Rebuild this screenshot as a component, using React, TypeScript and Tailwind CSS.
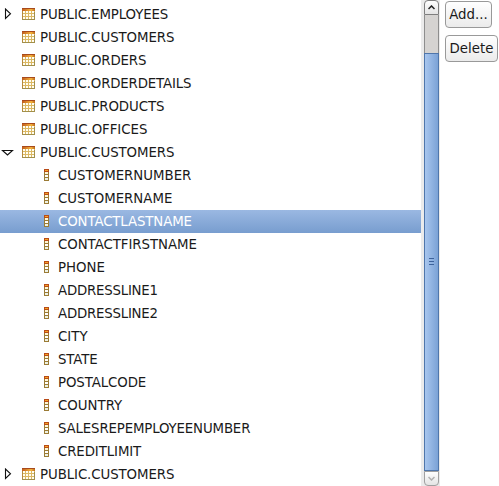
import React from "react";

type Row = {
  label: string;
  kind: "table" | "column";
  arrow?: "closed" | "open";
  selected?: boolean;
  tracking?: string;
};

const rows: Row[] = [
  { label: "PUBLIC.EMPLOYEES", kind: "table", arrow: "closed", tracking: "tracking-[-0.11px]" },
  { label: "PUBLIC.CUSTOMERS", kind: "table", tracking: "tracking-[-0.08px]" },
  { label: "PUBLIC.ORDERS", kind: "table", tracking: "tracking-[-0.13px]" },
  { label: "PUBLIC.ORDERDETAILS", kind: "table", tracking: "tracking-[-0.15px]" },
  { label: "PUBLIC.PRODUCTS", kind: "table", tracking: "tracking-[-0.08px]" },
  { label: "PUBLIC.OFFICES", kind: "table", tracking: "tracking-[-0.03px]" },
  { label: "PUBLIC.CUSTOMERS", kind: "table", arrow: "open", tracking: "tracking-[-0.08px]" },
  { label: "CUSTOMERNUMBER", kind: "column" },
  { label: "CUSTOMERNAME", kind: "column" },
  { label: "CONTACTLASTNAME", kind: "column", selected: true, tracking: "tracking-[-0.12px]" },
  { label: "CONTACTFIRSTNAME", kind: "column", tracking: "tracking-[-0.05px]" },
  { label: "PHONE", kind: "column" },
  { label: "ADDRESSLINE1", kind: "column", tracking: "tracking-[-0.22px]" },
  { label: "ADDRESSLINE2", kind: "column", tracking: "tracking-[-0.22px]" },
  { label: "CITY", kind: "column" },
  { label: "STATE", kind: "column", tracking: "tracking-[-0.15px]" },
  { label: "POSTALCODE", kind: "column", tracking: "tracking-[-0.1px]" },
  { label: "COUNTRY", kind: "column" },
  { label: "SALESREPEMPLOYEENUMBER", kind: "column", tracking: "tracking-[-0.15px]" },
  { label: "CREDITLIMIT", kind: "column", tracking: "tracking-[-0.1px]" },
  { label: "PUBLIC.CUSTOMERS", kind: "table", arrow: "closed", tracking: "tracking-[-0.08px]" },
];

function TableIcon() {
  return (
    <svg width="13" height="12" viewBox="0 0 13 12" shapeRendering="crispEdges">
      <defs>
        <linearGradient id="tableHead">
          <stop offset="0" stopColor="#c05a1c" />
          <stop offset="0.7" stopColor="#f6b43c" />
          <stop offset="1" stopColor="#b8681c" />
        </linearGradient>
      </defs>
      <rect width="13" height="12" fill="#dcb964" />
      <rect width="13" height="1" fill="#a84a1c" />
      <rect y="1" width="13" height="2" fill="url(#tableHead)" />
      {[3, 6, 9].map((y) =>
        [1, 4, 7, 10].map((x) => <rect key={`${x}-${y}`} x={x} y={y} width="2" height="2" fill="#fffdf2" />)
      )}
      <path d="M0.5 3v9" stroke="#b58a3c" />
      <path d="M0 11.5h13M12.5 4v8" stroke="#a2904c" />
    </svg>
  );
}

function ColumnIcon() {
  return (
    <svg width="5" height="12" viewBox="0 0 5 12" shapeRendering="crispEdges">
      <rect width="5" height="12" fill="#9b7b35" />
      <rect width="5" height="3" fill="#b84b18" />
      <rect x="1" y="1" width="3" height="1" fill="#f5a623" />
      <rect x="1" y="3" width="3" height="2" fill="#fff6d5" />
      <rect x="1" y="6" width="3" height="2" fill="#ffffff" />
      <rect x="1" y="9" width="3" height="2" fill="#edf2e5" />
    </svg>
  );
}

function Arrow({ kind }: { kind?: "closed" | "open" }) {
  return (
    <svg width="22" height="13" viewBox="0 0 22 13" className="shrink-0">
      {kind === "closed" && <path d="M5.5 1v9.5L10.5 5.75z" fill="#fff" stroke="#111" strokeWidth="1.1" />}
      {kind === "open" && <path d="M2.5 4.5h10L7.5 9z" fill="#fff" stroke="#111" strokeWidth="1.1" />}
    </svg>
  );
}

function ScrollButton({ up }: { up?: boolean }) {
  return (
    <div
      className={
        "flex h-[15px] shrink-0 items-center justify-center border bg-linear-to-b from-[#fefefe] to-[#e4e4e4] " +
        (up ? "rounded-t-[4px] border-[#7e7e7e]" : "rounded-b-[4px] border-[#a0a0a0]")
      }
    >
      <svg width="7" height="5" viewBox="0 0 7 5" fill="none" strokeWidth="1.5">
        {up ? <path d="M0.5 4L3.5 1L6.5 4" stroke="#222" /> : <path d="M0.5 1L3.5 4L6.5 1" stroke="#b0b0b0" />}
      </svg>
    </div>
  );
}

function Button({ children, className }: { children: React.ReactNode; className: string }) {
  return (
    <button
      className={
        "h-[27px] rounded-[4px] border border-[#999] bg-linear-to-b from-white to-[#ebebeb] text-center leading-[23px] whitespace-nowrap " +
        className
      }
    >
      {children}
    </button>
  );
}

export default function App() {
  return (
    <div className="flex h-[486px] w-[499px] overflow-hidden bg-white font-['DejaVu_Sans',sans-serif] text-[13.333px] text-[#1a1a1a]">
      <div className="w-[421px] pt-[3px]">
        {rows.map((row, i) => (
          <div
            key={i}
            className={
              "flex h-[23px] items-center " +
              (row.selected ? "bg-linear-to-b from-[#9ab8e2] to-[#789dcf] text-white" : "")
            }
          >
            <Arrow kind={row.arrow} />
            {row.kind === "table" ? (
              <span className="w-[18px] pb-px"><TableIcon /></span>
            ) : (
              <span className="w-9 pb-px pl-[22px]"><ColumnIcon /></span>
            )}
            <span className={"leading-[23px] whitespace-nowrap " + (row.tracking ?? "")}>{row.label}</span>
          </div>
        ))}
      </div>
      <div className="flex w-[19px] flex-col bg-[#ebebeb] pr-px pl-[3px]">
        <ScrollButton up />
        <div className="h-[38px] border-x border-[#8d8d8d] bg-[#d5d3d1]" />
        <div className="flex flex-1 flex-col items-center justify-center gap-[2px] border border-[#4f76ab] bg-linear-to-r from-[#a8c6ee] to-[#7ba2d6] pb-[2px]">
          <div className="h-px w-[5px] bg-[#3d629b]" />
          <div className="h-px w-[5px] bg-[#3d629b]" />
          <div className="h-px w-[5px] bg-[#3d629b]" />
        </div>
        <ScrollButton />
      </div>
      <div className="flex flex-col items-start gap-[7px] pt-px pl-[5px]">
        <Button className="w-[47px]">Add...</Button>
        <Button className="w-[53px]">Delete</Button>
      </div>
    </div>
  );
}
